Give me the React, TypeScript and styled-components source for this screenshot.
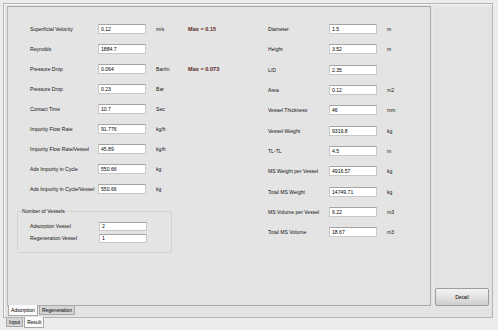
import React from "react";
import styled, { createGlobalStyle } from "styled-components";

type Field = { label: string; value: string; unit?: string; max?: string };

const leftFields: Field[] = [
  { label: "Superficial Velocity", value: "0.12", unit: "m/s", max: "Max = 0.15" },
  { label: "Reynolds", value: "1884.7" },
  { label: "Pressure Drop", value: "0.064", unit: "Bar/m", max: "Max = 0.073" },
  { label: "Pressure Drop", value: "0.23", unit: "Bar" },
  { label: "Contact Time", value: "10.7", unit: "Sec" },
  { label: "Impurity Flow Rate", value: "91.776", unit: "kg/h" },
  { label: "Impurity Flow Rate/Vessel", value: "45.89", unit: "kg/h" },
  { label: "Ads Impurity in Cycle", value: "550.66", unit: "kg" },
  { label: "Ads Impurity in Cycle/Vessel", value: "550.66", unit: "kg" },
];

const rightFields: Field[] = [
  { label: "Diameter", value: "1.5", unit: "m" },
  { label: "Height", value: "3.52", unit: "m" },
  { label: "L/D", value: "2.35" },
  { label: "Area", value: "0.12", unit: "m2" },
  { label: "Vessel Thickness", value: "46", unit: "mm" },
  { label: "Vessel Weight", value: "9319.8", unit: "kg" },
  { label: "TL-TL", value: "4.5", unit: "m" },
  { label: "MS Weight per Vessel", value: "4916.57", unit: "kg" },
  { label: "Total MS Weight", value: "14749.71", unit: "kg" },
  { label: "MS Volume per Vessel", value: "6.22", unit: "m3" },
  { label: "Total MS Volume", value: "18.67", unit: "m3" },
];

const vessels: Field[] = [
  { label: "Adsorption Vessel", value: "2" },
  { label: "Regeneration Vessel", value: "1" },
];

const GlobalStyle = createGlobalStyle`
  html, body {
    margin: 0;
    padding: 0;
    background: #ececec;
    font-family: "Liberation Sans", Arial, sans-serif;
    color: #111;
  }
`;

const Window = styled.div`
  width: 498px;
  height: 330px;
  padding: 3px 0 0 3px;
  box-sizing: border-box;
  overflow: hidden;
`;

const OuterPage = styled.div`
  width: 490px;
  height: 315px;
  box-sizing: border-box;
  border: 1px solid #b4b4b4;
  box-shadow: inset 1px 1px 0 #f6f6f6;
  background: #e3e3e3;
  padding: 2px 0 0 3px;
  display: flex;
`;

const InnerTabs = styled.div`
  width: 424px;
  display: flex;
  flex-direction: column;
`;

const InnerPage = styled.div`
  height: 300px;
  box-sizing: border-box;
  border: 1px solid #a9a9a9;
  border-left-color: #b8b8b8;
  background: #e4e4e4;
  padding: 12px 0 0 9px;
  display: flex;
`;

const TabStrip = styled.div<{ $indent: number }>`
  display: flex;
  align-items: flex-start;
  padding-left: ${(p) => p.$indent}px;
  gap: 1px;
`;

const Tab = styled.div<{ $active?: boolean }>`
  font-size: 5px;
  line-height: ${(p) => (p.$active ? 10 : 8)}px;
  height: ${(p) => (p.$active ? 10 : 8)}px;
  padding: 0 2px;
  margin-top: ${(p) => (p.$active ? -1 : 0)}px;
  border: 1px solid #a8a8a8;
  border-top: none;
  background: ${(p) => (p.$active ? "#fafafa" : "#d4d4d4")};
  color: #000;
  white-space: nowrap;
`;

const Column = styled.div<{ $width?: number }>`
  display: flex;
  flex-direction: column;
  width: ${(p) => (p.$width ? `${p.$width}px` : "auto")};
`;

const Row = styled.div<{ $indent: number; $height: number }>`
  display: flex;
  align-items: center;
  height: ${(p) => p.$height}px;
  padding-left: ${(p) => p.$indent}px;
`;

const Label = styled.span<{ $width: number }>`
  width: ${(p) => p.$width}px;
  font-size: 5.1px;
  white-space: nowrap;
  color: #111;
`;

const Input = styled.div<{ $height: number }>`
  width: 48px;
  height: ${(p) => p.$height}px;
  box-sizing: border-box;
  background: #fff;
  border: 1px solid #c8c8c8;
  border-top-color: #a4a4a4;
  font-size: 5.1px;
  line-height: ${(p) => p.$height - 2}px;
  padding-left: 2px;
  color: #000;
`;

const Unit = styled.span`
  width: 32px;
  margin-left: 10px;
  font-size: 5.1px;
  color: #111;
`;

const Max = styled.span`
  font-size: 5.6px;
  font-weight: bold;
  color: #5c1f24;
  white-space: nowrap;
`;

const GroupBox = styled.fieldset`
  width: 155px;
  box-sizing: border-box;
  margin: 9px 0 0 0;
  padding: 0 0 8px 4px;
  border: 1px solid #d2d2d2;
  border-radius: 2px;
`;

const Legend = styled.legend`
  font-size: 5.1px;
  line-height: 6px;
  padding: 0;
  color: #111;
  margin-bottom: 6px;
`;

const SidePanel = styled.div`
  flex: 1;
  margin: 0 2px 11px 2px;
  display: flex;
  flex-direction: column;
  justify-content: flex-end;
  border-left: 1px solid #ededed;
  border-top: 1px solid #ededed;
`;

const DetailButton = styled.button`
  margin: 0 1px 0 1px;
  height: 18px;
  border: 1px solid #9c9c9c;
  border-radius: 2px;
  background: linear-gradient(#f4f4f4, #e2e2e2 50%, #cdcdcd);
  font-family: "Liberation Sans", Arial, sans-serif;
  font-size: 5.2px;
  color: #000;
  padding: 0;
`;

const FieldRow: React.FC<{ f: Field; labelWidth: number; indent: number; height?: number; inputHeight?: number }> = ({
  f,
  labelWidth,
  indent,
  height = 20,
  inputHeight = 10,
}) => (
  <Row $indent={indent} $height={height}>
    <Label $width={labelWidth}>{f.label}</Label>
    <Input $height={inputHeight}>{f.value}</Input>
    {f.unit !== undefined || f.max ? <Unit>{f.unit}</Unit> : null}
    {f.max && <Max>{f.max}</Max>}
  </Row>
);

export default function App() {
  return (
    <>
      <GlobalStyle />
      <Window>
        <OuterPage>
          <InnerTabs>
            <InnerPage>
              <Column $width={251}>
                {leftFields.map((f, i) => (
                  <FieldRow key={i} f={f} labelWidth={68} indent={13} />
                ))}
                <GroupBox>
                  <Legend>Number of Vessels</Legend>
                  {vessels.map((f) => (
                    <FieldRow key={f.label} f={f} labelWidth={69} indent={8} height={12} inputHeight={9} />
                  ))}
                </GroupBox>
              </Column>
              <Column>
                {rightFields.map((f) => (
                  <FieldRow key={f.label} f={f} labelWidth={61} indent={0} height={20.3} />
                ))}
              </Column>
            </InnerPage>
            <TabStrip $indent={1}>
              <Tab $active>Adsorption</Tab>
              <Tab>Regeneration</Tab>
            </TabStrip>
          </InnerTabs>
          <SidePanel>
            <DetailButton>Detail</DetailButton>
          </SidePanel>
        </OuterPage>
        <TabStrip $indent={3}>
          <Tab>Input</Tab>
          <Tab $active>Result</Tab>
        </TabStrip>
      </Window>
    </>
  );
}
